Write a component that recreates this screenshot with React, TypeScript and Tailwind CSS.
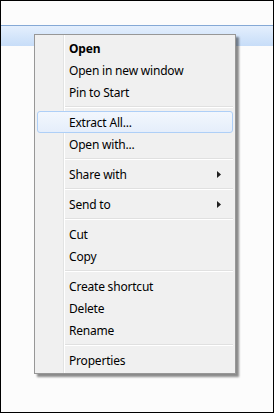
type Item = { label?: string; bold?: boolean; sub?: boolean; hover?: boolean; sep?: boolean };

const items: Item[] = [
  { label: "Open", bold: true },
  { label: "Open in new window" },
  { label: "Pin to Start" },
  { sep: true },
  { label: "Extract All...", hover: true },
  { label: "Open with..." },
  { sep: true },
  { label: "Share with", sub: true },
  { sep: true },
  { label: "Send to", sub: true },
  { sep: true },
  { label: "Cut" },
  { label: "Copy" },
  { sep: true },
  { label: "Create shortcut" },
  { label: "Delete" },
  { label: "Rename" },
  { sep: true },
  { label: "Properties" },
];

function Row({ item }: { item: Item }) {
  if (item.sep) {
    return (
      <div className="h-[8px] flex flex-col justify-center ml-[28px] mr-[2px]">
        <div className="h-px bg-[#e0e0e0]" />
        <div className="h-px bg-white" />
      </div>
    );
  }
  return (
    <div
      className={
        item.hover
          ? "relative h-[22px] mx-[2px] flex items-center pl-[31px] pr-[8px] pt-px rounded-[3px] border border-[#aecff7] bg-gradient-to-b from-[#f2f7fd] to-[#e5eefb]"
          : "relative h-[22px] mx-[2px] flex items-center pl-[31px] pr-[8px] pt-px rounded-[3px] border border-transparent"
      }
    >
      <span className={item.bold ? "flex-1 font-bold text-black" : "flex-1 text-black"}>{item.label}</span>
      {item.sub && (
        <svg width="4" height="7" viewBox="0 0 4 7" className="mr-[3px]">
          <path d="M0 0 L4 3.5 L0 7 Z" fill="#202020" />
        </svg>
      )}
    </div>
  );
}

export default function App() {
  return (
    <div
      className="relative w-[274px] h-[413px] border border-black bg-[#fcfcfc] overflow-hidden text-[12px] tracking-[-0.2px]"
      style={{ fontFamily: '"Noto Sans", "Open Sans", sans-serif' }}
    >
      <div className="mt-[24px] h-[21px] border-t border-[#85a9d6] bg-gradient-to-b from-[#e4effd] to-[#c7ddf8]" />

      <div className="absolute left-[33px] top-[33px] w-[202px] h-[340px] border border-[#979797] bg-[#f0f0f0] py-[2px] shadow-[3px_3px_2px_rgba(0,0,0,0.45)]">
        <div className="absolute left-[28px] top-0 bottom-0 w-px bg-[#e2e3e3]" />
        <div className="absolute left-[29px] top-0 bottom-0 w-px bg-white" />
        {items.map((item, i) => (
          <Row key={i} item={item} />
        ))}
      </div>
    </div>
  );
}
